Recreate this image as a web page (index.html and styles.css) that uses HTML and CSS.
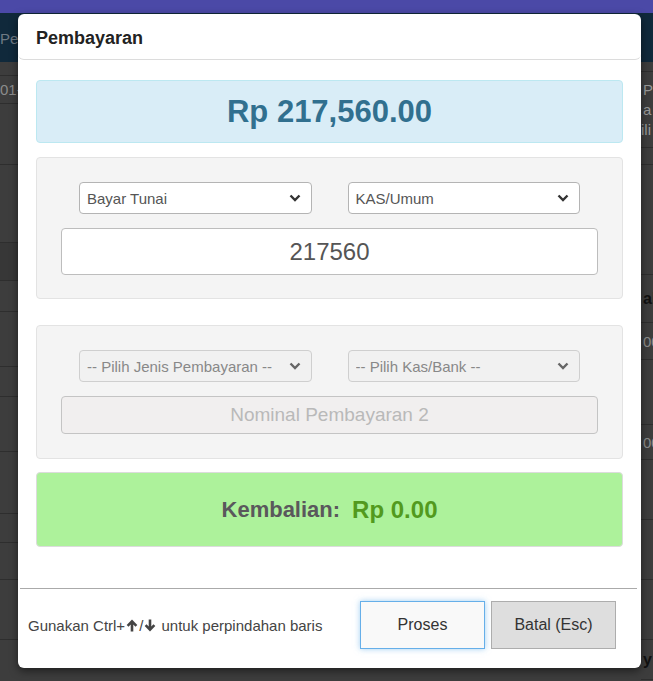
FILE: index.html
```html
<!DOCTYPE html>
<html lang="id">
<head>
  <meta charset="UTF-8" />
  <title>Pembayaran</title>
  <link rel="stylesheet" href="styles.css">
</head>
<body>
  <!-- halaman di belakang modal -->
  <div class="latar">
    <div class="bilah-atas"></div>
    <div class="kepala-latar"><span>Pembayaran Penjualan</span></div>
    <div class="tabel-latar">
      <div class="kolom-kiri">
        <div class="baris b14"></div>
        <div class="baris b28">01-04-2024</div>
        <div class="baris b61"></div>
        <div class="baris b78"></div>
        <div class="baris b38 gelap"></div>
        <div class="baris b31"></div>
        <div class="baris b55"></div>
        <div class="baris b30"></div>
        <div class="baris b55"></div>
        <div class="baris b62"></div>
        <div class="baris b29"></div>
        <div class="baris b37"></div>
        <div class="baris b60"></div>
      </div>
      <div class="kolom-kanan">
        <div class="baris b10"></div>
        <div class="baris b76 info">
          <span>P</span>
          <span>a</span>
          <span class="geser">ili</span>
        </div>
        <div class="baris b17"></div>
        <div class="baris b110"></div>
        <div class="baris b48 judul">al</div>
        <div class="baris b37">00</div>
        <div class="baris b65"></div>
        <div class="baris b35">00</div>
        <div class="baris b60"></div>
        <div class="baris b60"></div>
        <div class="baris b60"></div>
        <div class="baris b40 judul">y</div>
      </div>
    </div>
  </div>

  <div class="modal">
    <div class="modal-kepala">Pembayaran</div>

    <div class="modal-isi">
      <div class="total">Rp 217,560.00</div>

      <div class="panel">
        <div class="baris-pilih">
          <div class="kolom">
            <div class="pilih">
              <select>
                <option>Bayar Tunai</option>
              </select>
              <svg class="panah" width="12" height="8" viewBox="0 0 12 8"><polyline points="1.5,1.5 6,6 10.5,1.5" fill="none" stroke="#333" stroke-width="2.4"/></svg>
            </div>
          </div>
          <div class="kolom">
            <div class="pilih">
              <select>
                <option>KAS/Umum</option>
              </select>
              <svg class="panah" width="12" height="8" viewBox="0 0 12 8"><polyline points="1.5,1.5 6,6 10.5,1.5" fill="none" stroke="#333" stroke-width="2.4"/></svg>
            </div>
          </div>
        </div>
        <input class="nominal" type="text" value="217560">
      </div>

      <div class="panel panel-kedua">
        <div class="baris-pilih">
          <div class="kolom">
            <div class="pilih">
              <select disabled>
                <option>-- Pilih Jenis Pembayaran --</option>
              </select>
              <svg class="panah" width="12" height="8" viewBox="0 0 12 8"><polyline points="1.5,1.5 6,6 10.5,1.5" fill="none" stroke="#666" stroke-width="2.4"/></svg>
            </div>
          </div>
          <div class="kolom">
            <div class="pilih">
              <select disabled>
                <option>-- Pilih Kas/Bank --</option>
              </select>
              <svg class="panah" width="12" height="8" viewBox="0 0 12 8"><polyline points="1.5,1.5 6,6 10.5,1.5" fill="none" stroke="#666" stroke-width="2.4"/></svg>
            </div>
          </div>
        </div>
        <input class="nominal nominal-kedua" type="text" placeholder="Nominal Pembayaran 2" disabled>
      </div>

      <div class="kembalian">
        <span class="label-kembalian">Kembalian:</span>
        <span class="nilai-kembalian">Rp 0.00</span>
      </div>
    </div>

    <div class="modal-kaki">
      <p class="petunjuk">Gunakan Ctrl+<svg class="ikon" width="12" height="13" viewBox="0 0 12 13"><path d="M6 12.5V2.5M1.6 6.8L6 2.4l4.4 4.4" fill="none" stroke="#444" stroke-width="2.6"/></svg>/<svg class="ikon" width="12" height="13" viewBox="0 0 12 13"><path d="M6 0.5v10M1.6 6.2L6 10.6l4.4-4.4" fill="none" stroke="#444" stroke-width="2.6"/></svg> untuk perpindahan baris</p>
      <div class="tombol-grup">
        <button class="tombol tombol-proses">Proses</button>
        <button class="tombol tombol-batal">Batal (Esc)</button>
      </div>
    </div>
  </div>
</body>
</html>
```

FILE: styles.css
```css
html, body {
  margin: 0;
  height: 100%;
}
body {
  font-family: "Liberation Sans", Arial, sans-serif;
  background: #3d3d3d;
  overflow: hidden;
  position: relative;
}

/* latar belakang */
.bilah-atas {
  height: 13px;
  background: #4b49a7;
}
.kepala-latar {
  height: 49px;
  background: #10293b;
  color: #6f7a84;
  font-size: 15px;
  line-height: 52px;
  white-space: nowrap;
  overflow: hidden;
}
.tabel-latar {
  display: grid;
  grid-template-columns: 641px 1fr;
}
.baris {
  box-sizing: border-box;
  border-bottom: 1px solid #2e2e2e;
  font-size: 15px;
  color: #8c8c8c;
  white-space: nowrap;
  overflow: hidden;
  display: flex;
  align-items: center;
}
.kolom-kanan .baris {
  padding-left: 2px;
}
.gelap { background: #373737; }
.info {
  flex-direction: column;
  align-items: flex-start;
  justify-content: center;
  gap: 3px;
  color: #9a9a9a;
}
.geser { margin-left: -2px; }
.judul {
  font-weight: bold;
  color: #111;
  font-size: 16px;
}
.b10 { height: 10px; }
.b14 { height: 14px; }
.b17 { height: 17px; }
.b28 { height: 28px; }
.b29 { height: 29px; }
.b30 { height: 30px; }
.b31 { height: 31px; }
.b35 { height: 35px; }
.b37 { height: 37px; }
.b38 { height: 38px; }
.b40 { height: 40px; }
.b48 { height: 48px; }
.b55 { height: 55px; }
.b60 { height: 60px; }
.b61 { height: 61px; }
.b62 { height: 62px; }
.b65 { height: 65px; }
.b76 { height: 76px; }
.b78 { height: 78px; }
.b110 { height: 110px; }

/* modal */
.modal {
  position: absolute;
  left: 18px;
  top: 14px;
  width: 623px;
  height: 654px;
  background: #fff;
  border-radius: 6px;
  box-shadow: 0 3px 9px rgba(0, 0, 0, 0.5);
  display: flex;
  flex-direction: column;
}
.modal-kepala {
  box-sizing: border-box;
  height: 46px;
  padding: 4px 18px 0;
  display: flex;
  align-items: center;
  font-size: 18px;
  font-weight: bold;
  color: #222;
  border-bottom: 1px solid #dcdcdc;
  border-radius: 0 0 6px 6px;
}
.modal-isi {
  padding: 20px 18px 41px;
}
.total {
  box-sizing: border-box;
  height: 63px;
  background: #d9edf7;
  border: 1px solid #bce8f1;
  border-radius: 4px;
  color: #31708f;
  font-size: 31px;
  font-weight: bold;
  display: flex;
  align-items: center;
  justify-content: center;
  margin-bottom: 14px;
}
.panel {
  background: #f4f4f4;
  border: 1px solid #e3e3e3;
  border-radius: 4px;
  padding: 24px 24px 23px;
}
.panel-kedua {
  margin-top: 26px;
  padding-bottom: 24px;
}
.baris-pilih {
  display: flex;
  margin-bottom: 14px;
}
.kolom {
  flex: 1;
  padding: 0 18px;
}
.pilih {
  position: relative;
}
.pilih select {
  appearance: none;
  -webkit-appearance: none;
  width: 100%;
  height: 32px;
  box-sizing: border-box;
  border: 1px solid #b4b4b4;
  border-radius: 4px;
  background: #fff;
  color: #555;
  font-family: inherit;
  font-size: 15px;
  padding: 0 7px;
}
.pilih select:disabled {
  background: #f1f1f1;
  border-color: #cfcfcf;
  color: #888;
  opacity: 1;
}
.panah {
  position: absolute;
  right: 11px;
  top: 12px;
  pointer-events: none;
}
.nominal {
  display: block;
  width: 100%;
  box-sizing: border-box;
  height: 47px;
  border: 1px solid #bdbdbd;
  border-radius: 4px;
  background: #fff;
  color: #555;
  font-family: inherit;
  font-size: 24px;
  text-align: center;
  outline: none;
}
.nominal-kedua {
  height: 38px;
  font-size: 19px;
  background: #f1efef;
  border-color: #c4c4c4;
}
.nominal-kedua::placeholder {
  color: #b9b9b9;
}
.kembalian {
  box-sizing: border-box;
  height: 75px;
  margin-top: 13px;
  background: #adf29b;
  border: 1px solid #dcdcdc;
  border-radius: 4px;
  display: flex;
  align-items: center;
  justify-content: center;
  gap: 12px;
  font-weight: bold;
}
.label-kembalian {
  font-size: 22px;
  color: #5a585c;
}
.nilai-kembalian {
  font-size: 24px;
  color: #529a1e;
}
.modal-kaki {
  margin: 0 4px 0 2px;
  border-top: 1px solid #aaa;
  padding: 12px 21px 0 8px;
  display: flex;
  align-items: center;
  justify-content: space-between;
}
.petunjuk {
  margin: 0;
  font-size: 15px;
  color: #444;
  white-space: nowrap;
}
.ikon {
  vertical-align: -1px;
  margin: 0 1px;
}
.tombol-grup {
  display: flex;
  gap: 6px;
}
.tombol {
  width: 125px;
  height: 48px;
  font-family: inherit;
  font-size: 16px;
  color: #333;
  border-radius: 0;
  cursor: pointer;
}
.tombol-proses {
  background: #f9f9f9;
  border: 1px solid #66afe9;
  box-shadow: 0 0 6px rgba(102, 175, 233, 0.6);
}
.tombol-batal {
  background: #dedede;
  border: 1px solid #adadad;
}
```
